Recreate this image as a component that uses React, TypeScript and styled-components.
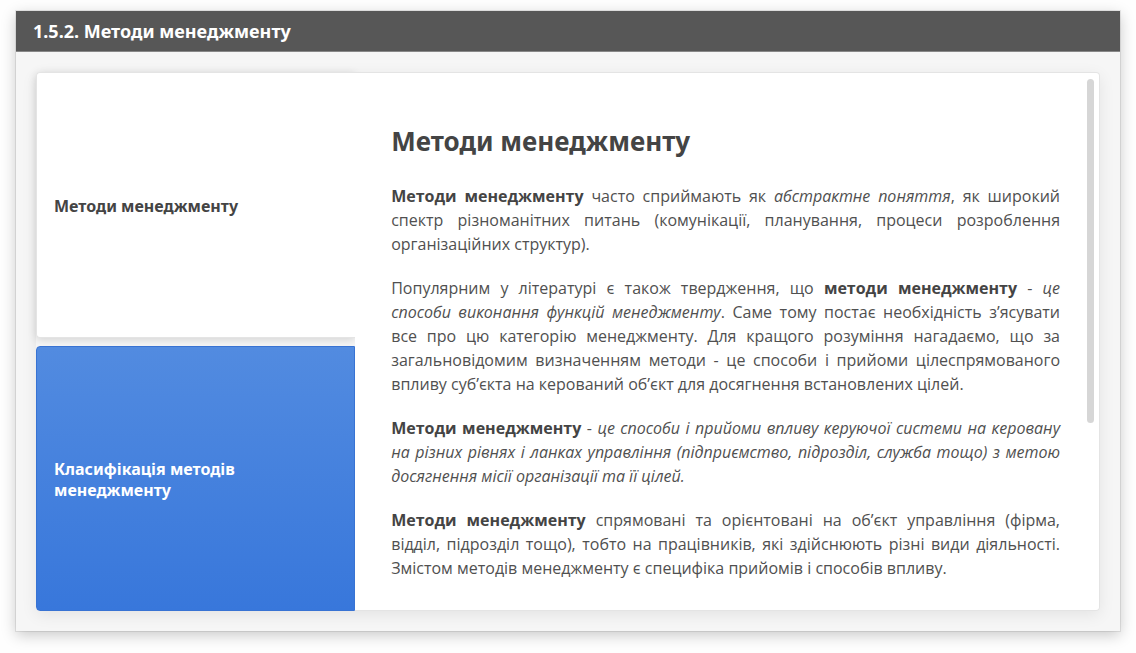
import React, { useState } from "react";
import styled, { createGlobalStyle } from "styled-components";

const GlobalStyle = createGlobalStyle`
  *, *::before, *::after { box-sizing: border-box; }
  body {
    margin: 0;
    background: #fefefe;
    color: #444;
    font-family: "Open Sans", "Noto Sans", sans-serif;
  }
`;

const Page = styled.main`
  padding: 11px 16px 21px;
`;

const Frame = styled.section`
  background: #f6f6f6;
  box-shadow: 0 0 0 1px rgba(0, 0, 0, 0.08), 0 4px 14px rgba(0, 0, 0, 0.22);
`;

const FrameHeader = styled.header`
  display: flex;
  align-items: center;
  height: 41px;
  padding: 0 17px;
  background: #575757;
  border-bottom: 1px solid #888;
`;

const FrameTitle = styled.h1`
  margin: 0;
  color: #fff;
  font-family: "Noto Sans", sans-serif;
  font-size: 18px;
  line-height: 24px;
  font-weight: 700;
`;

const FrameBody = styled.div`
  padding: 20px;
`;

const Card = styled.div`
  display: flex;
  border-radius: 4px;
  box-shadow: 0 4px 16px rgba(0, 0, 0, 0.08);
`;

const TabList = styled.nav`
  display: flex;
  flex-direction: column;
  gap: 8px;
  flex: 0 0 30%;
`;

const Tab = styled.button<{ $highlighted: boolean }>`
  flex: 1;
  padding: 4px 60px 0 17px;
  border: 1px solid ${(p) => (p.$highlighted ? "#3873d3" : "#e4e4e4")};
  border-right-width: ${(p) => (p.$highlighted ? "1px" : "0")};
  border-radius: 4px 0 0 4px;
  background: ${(p) =>
    p.$highlighted ? "linear-gradient(#528be0, #3877db)" : "#fff"};
  box-shadow: 0 2px 8px rgba(0, 0, 0, ${(p) => (p.$highlighted ? 0 : 0.14)});
  color: ${(p) => (p.$highlighted ? "#fff" : "#444")};
  font-family: "Noto Sans", sans-serif;
  font-size: 16px;
  line-height: 21px;
  font-weight: 700;
  text-align: left;
  cursor: pointer;
`;

const Panel = styled.article`
  position: relative;
  flex: 1;
  min-width: 0;
  padding: 50px 39px 30px 36px;
  border: 1px solid #e4e4e4;
  border-left: 0;
  border-radius: 0 4px 4px 0;
  background: #fff;
`;

const ScrollThumb = styled.div`
  position: absolute;
  top: 6px;
  right: 5px;
  width: 7px;
  height: 64%;
  border-radius: 4px;
  background: #d6d6d6;
`;

const Heading = styled.h2`
  margin: 0 0 25px;
  font-family: "Noto Sans", sans-serif;
  font-size: 26px;
  line-height: 36px;
  font-weight: 700;
`;

const Paragraph = styled.p`
  margin: 0 0 20px;
  color: #505050;
  font-size: 16px;
  line-height: 24px;
  text-align: justify;

  strong { color: #444; }
  &:last-of-type { margin-bottom: 0; }
`;

const tabs = ["Методи менеджменту", "Класифікація методів менеджменту"];

export default function App() {
  const [active, setActive] = useState(0);
  return (
    <>
      <GlobalStyle />
      <Page>
        <Frame>
          <FrameHeader>
            <FrameTitle>1.5.2. Методи менеджменту</FrameTitle>
          </FrameHeader>
          <FrameBody>
            <Card>
              <TabList>
                {tabs.map((label, i) => (
                  <Tab
                    key={label}
                    type="button"
                    $highlighted={i !== active}
                    onClick={() => setActive(i)}
                  >
                    {label}
                  </Tab>
                ))}
              </TabList>
              <Panel>
                <Heading>Методи менеджменту</Heading>
                <Paragraph>
                  <strong>Методи менеджменту</strong> часто сприймають як{" "}
                  <em>абстрактне поняття</em>, як широкий спектр різноманітних
                  питань (комунікації, планування, процеси розроблення
                  організаційних структур).
                </Paragraph>
                <Paragraph>
                  Популярним у літературі є також твердження, що{" "}
                  <strong>методи менеджменту</strong> -{" "}
                  <em>це способи виконання функцій менеджменту</em>. Саме тому
                  постає необхідність з’ясувати все про цю категорію
                  менеджменту. Для кращого розуміння нагадаємо, що за
                  загальновідомим визначенням методи - це способи і прийоми
                  цілеспрямованого впливу суб’єкта на керований об’єкт для
                  досягнення встановлених цілей.
                </Paragraph>
                <Paragraph>
                  <strong>Методи менеджменту</strong> -{" "}
                  <em>
                    це способи і прийоми впливу керуючої системи на керовану на
                    різних рівнях і ланках управління (підприємство, підрозділ,
                    служба тощо) з метою досягнення місії організації та її
                    цілей.
                  </em>
                </Paragraph>
                <Paragraph>
                  <strong>Методи менеджменту</strong> спрямовані та орієнтовані
                  на об’єкт управління (фірма, відділ, підрозділ тощо), тобто на
                  працівників, які здійснюють різні види діяльності. Змістом
                  методів менеджменту є специфіка прийомів і способів впливу.
                </Paragraph>
                <ScrollThumb />
              </Panel>
            </Card>
          </FrameBody>
        </Frame>
      </Page>
    </>
  );
}
